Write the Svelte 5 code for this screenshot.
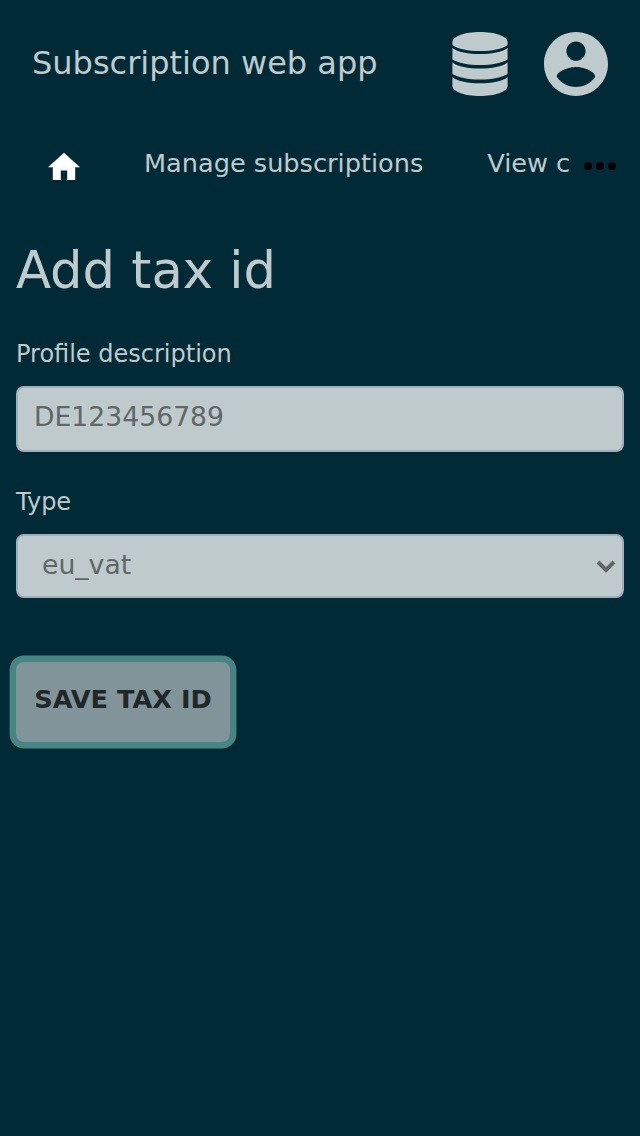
<script>
  let taxId = $state('');
  let type = $state('eu_vat');
</script>

<div class="page">
  <header>
    <span class="brand">Subscription web app</span>
    <svg class="db" viewBox="0 0 56 64" aria-hidden="true">
      <path d="M.4 10C1 4 13 0 28 0s27 4 27.600 10v3C50 17 40 19 28 19S6 17 .4 13z" />
      <path d="M.4 16C6 20 16 22 28 22s22-2 27.600-6v11.500C50 31 40 33 28 33S6 31 .4 27.500z" />
      <path d="M.4 30.600C6 34.600 16 36.600 28 36.600s22-2 27.600-6v11.500c-5.600 3.500-15.600 5.500-27.600 5.500S6 45.600.4 42.100z" />
      <path d="M.4 45.200C6 49.200 16 51.200 28 51.200s22-2 27.600-6V54C55 60 43 64 28 64S1 60 .4 54z" />
    </svg>
    <svg class="user" viewBox="2 2 20 20" aria-hidden="true">
      <path d="M12 2C6.480 2 2 6.480 2 12s4.480 10 10 10 10-4.480 10-10S17.520 2 12 2zm0 3c1.660 0 3 1.340 3 3s-1.340 3-3 3-3-1.340-3-3 1.340-3 3-3zm0 14.200c-2.500 0-4.710-1.280-6-3.220.03-1.990 4-3.080 6-3.080 1.990 0 5.970 1.090 6 3.080-1.290 1.940-3.500 3.220-6 3.220z" />
    </svg>
  </header>
  <nav>
    <svg class="home" viewBox="0 0 20 20" aria-hidden="true">
      <path d="M8 20v-6h4v6h5v-8h3L10 3 0 12h3v8z" />
    </svg>
    <a class="manage" href="#manage">Manage subscriptions</a>
    <a class="view" href="#view">View c</a>
    <svg class="dots" viewBox="0 0 32 8" aria-hidden="true">
      <circle cx="4" cy="4" r="4" /><circle cx="16" cy="4" r="4" /><circle cx="28" cy="4" r="4" />
    </svg>
  </nav>
  <main>
    <h1>Add tax id</h1>
    <label for="tax">Profile description</label>
    <input id="tax" placeholder="DE123456789" bind:value={taxId} />
    <label for="type">Type</label>
    <div class="select">
      <select id="type" bind:value={type}><option>eu_vat</option></select>
      <svg viewBox="0 0 20 14" aria-hidden="true"><path d="M2 3l8 8 8-8" /></svg>
    </div>
    <button>SAVE TAX ID</button>
  </main>
</div>

<style>
  :global(body) { background: #002b36; }
  .page { min-height: 1136px; background: #002b36; color: #bfcacc; font-family: "DejaVu Sans", sans-serif; overflow: hidden; }
  header { display: flex; align-items: center; height: 128px; padding: 0 32px; box-sizing: border-box; }
  .brand { flex: 1; padding-bottom: 2px; font-size: 32px; line-height: 48px; }
  svg { display: block; flex: none; fill: #bfcacc; }
  .db { width: 56px; height: 64px; margin-right: 36px; }
  .user { width: 64px; height: 64px; }
  nav { display: flex; align-items: center; height: 72px; padding: 0 24px 0 48px; }
  a { padding-bottom: 2px; color: inherit; text-decoration: none; font-size: 25.6px; line-height: 40px; white-space: nowrap; }
  .home { width: 32px; height: 32px; margin-bottom: 1px; fill: #fff; }
  .manage { margin-left: 64px; }
  .view { margin-left: 64px; }
  .dots { width: 32px; height: 8px; margin: 4px 0 0 auto; fill: #000; }
  main { padding: 40px 16px; }
  h1 { margin: 0 0 34px; font-size: 51.2px; line-height: 60px; font-weight: 400; }
  label { display: block; font-size: 24px; line-height: 40px; margin-bottom: 12px; }
  input, select { display: block; box-sizing: border-box; width: 100%; border: 2px solid #9fb0bb; border-radius: 8px; background: #bfcacc; color: #5f6769; font: 26.6667px "DejaVu Sans", sans-serif; outline: none; }
  input { height: 66px; padding: 0 16px 5px; margin-bottom: 30px; }
  input::placeholder { color: #5f6769; opacity: 1; }
  select { height: 64px; padding: 0 24px 3px; appearance: none; }
  .select { display: grid; align-items: center; margin-bottom: 64px; }
  .select > * { grid-area: 1 / 1; }
  .select svg { justify-self: end; width: 20px; height: 14px; margin-right: 8px; fill: none; stroke: #5f6769; stroke-width: 4; }
  button { display: block; width: 214px; height: 80px; padding: 0 0 6px; border: 0; border-radius: 8px; background: #80949a; color: #1f2729; box-shadow: 0 0 0 6.400px #468584; font: bold 25.6px "DejaVu Sans", sans-serif; white-space: nowrap; }
</style>
